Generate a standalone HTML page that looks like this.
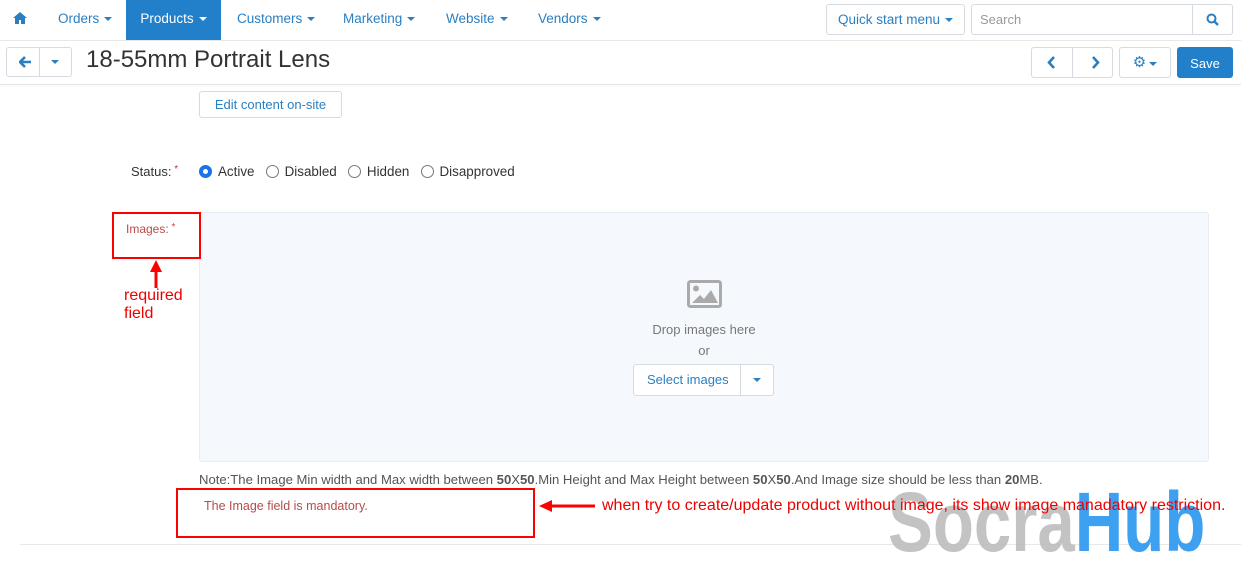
<!DOCTYPE html><html><head><style>
*{box-sizing:border-box;margin:0;padding:0}
body{width:1241px;height:559px;overflow:hidden;background:#fff;font-family:"Liberation Sans",sans-serif;color:#333;position:relative}
.a{position:absolute}
.nav{top:0;left:0;width:1241px;height:41px;border-bottom:1px solid #e8e8e8}
.ni{position:absolute;top:0;height:40px;line-height:37px;font-size:13.5px;color:#2a7fc1}
.car{display:inline-block;width:0;height:0;border-left:4px solid transparent;border-right:4px solid transparent;border-top:4px solid currentColor;vertical-align:middle;margin-left:5px}
.btn{position:absolute;border:1px solid #d5dbe0;border-radius:3px;background:#fff;color:#2a7fc1;font-size:13px;text-align:center}
.red{color:#e00;font-family:"Liberation Sans",sans-serif}
.rad{display:inline-block;width:13px;height:13px;border:1px solid #777;border-radius:50%;vertical-align:-2px;margin-right:6px;background:#fff}
</style></head><body>
<div class="a nav"></div>
<svg class="a" style="left:13px;top:12px" width="14" height="12" viewBox="0 0 14 12"><path d="M7 0L0 6h2v6h4V8h2v4h4V6h2z" fill="#2a7fc1"/></svg>
<div class="ni" style="left:58px">Orders<span class="car"></span></div>
<div class="ni" style="left:126px;width:95px;background:#2180c9;color:#fff;text-align:center">Products<span class="car"></span></div>
<div class="ni" style="left:237px">Customers<span class="car"></span></div>
<div class="ni" style="left:343px">Marketing<span class="car"></span></div>
<div class="ni" style="left:446px">Website<span class="car"></span></div>
<div class="ni" style="left:538px">Vendors<span class="car"></span></div>
<div class="btn" style="left:826px;top:4px;width:139px;height:31px;line-height:29px;font-size:13.5px">Quick start menu<span class="car"></span></div>
<div class="btn" style="left:971px;top:4px;width:262px;height:31px;line-height:29px;text-align:left;padding-left:8px;color:#999">Search</div>
<div class="btn" style="left:1192px;top:4px;width:41px;height:31px;border-radius:0 3px 3px 0"></div>
<svg class="a" style="left:1206px;top:13px" width="13" height="13" viewBox="0 0 13 13"><circle cx="5.5" cy="5.5" r="4" stroke="#2a7fc1" stroke-width="2" fill="none"/><path d="M8.5 8.5L12 12" stroke="#2a7fc1" stroke-width="2.4"/></svg>
<div class="a" style="left:0;top:84px;width:1241px;height:1px;background:#e5e5e5;box-shadow:0 1px 2px rgba(0,0,0,.05)"></div>
<div class="btn" style="left:6px;top:47px;width:66px;height:30px"></div>
<div class="a" style="left:39px;top:47px;width:1px;height:30px;background:#d5dbe0"></div>
<svg class="a" style="left:19px;top:56px" width="13" height="12" viewBox="0 0 13 12"><path d="M6 1L1 6l5 5M1 6h11" stroke="#2a7fc1" stroke-width="2.6" fill="none"/></svg>
<span class="a car" style="left:51px;top:60px;color:#2a7fc1;margin:0"></span>
<div class="a" style="left:86px;top:46px;font-size:24px;color:#333">18-55mm Portrait Lens</div>
<div class="btn" style="left:1031px;top:47px;width:82px;height:31px"></div>
<div class="a" style="left:1072px;top:47px;width:1px;height:31px;background:#d5dbe0"></div>
<svg class="a" style="left:1046px;top:56px" width="60" height="13"><path d="M8 1L3 6.5 8 12M47 1l5 5.5-5 5.5" stroke="#2a7fc1" stroke-width="2.6" fill="none"/></svg>
<div class="btn" style="left:1119px;top:47px;width:52px;height:31px;line-height:29px"><span style="font-size:15px">⚙</span><span class="car" style="margin-left:3px"></span></div>
<div class="btn" style="left:1177px;top:47px;width:56px;height:31px;line-height:31px;background:#2180c9;border-color:#2180c9;color:#fff">Save</div>
<div class="btn" style="left:199px;top:91px;width:143px;height:27px;line-height:25px">Edit content on-site</div>
<div class="a" style="left:131px;top:164px;font-size:13px">Status:<span style="color:#c33;font-size:10px;vertical-align:top"> *</span></div>
<div class="a" style="left:199px;top:164px;font-size:13.4px">
<span class="rad" style="border:4px solid #1a73e8"></span>Active&nbsp;&nbsp;&nbsp;<span class="rad"></span>Disabled&nbsp;&nbsp;&nbsp;<span class="rad"></span>Hidden&nbsp;&nbsp;&nbsp;<span class="rad"></span>Disapproved</div>
<div class="a" style="left:199px;top:212px;width:1010px;height:250px;background:#f5f9fd;border:1px solid #e6edf3;border-radius:3px"></div>
<svg class="a" style="left:687px;top:280px" width="35" height="28" viewBox="0 0 35 28"><rect x="1.5" y="1.5" width="32" height="25" rx="2" fill="none" stroke="#aaa" stroke-width="3"/><circle cx="9" cy="8.5" r="3" fill="#aaa"/><path d="M5 23l8-8 4 4 7-9 7 13z" fill="#aaa"/></svg>
<div class="a" style="left:600px;top:322px;width:208px;text-align:center;font-size:13px;color:#777">Drop images here</div>
<div class="a" style="left:600px;top:343px;width:208px;text-align:center;font-size:13px;color:#777">or</div>
<div class="btn" style="left:633px;top:364px;width:141px;height:32px;line-height:30px;text-align:left;padding-left:13px">Select images</div>
<div class="a" style="left:740px;top:364px;width:1px;height:32px;background:#d5dbe0"></div>
<span class="a car" style="left:753px;top:378px;color:#2a7fc1;margin:0"></span>
<div class="a" style="left:126px;top:222px;font-size:12px;color:#b94a48">Images:<span style="font-size:10px;vertical-align:top"> *</span></div>
<div class="a" style="left:112px;top:212px;width:89px;height:47px;border:2px solid #f00"></div>
<svg class="a" style="left:148px;top:258px" width="16" height="32"><path d="M8 2L2 14h12z" fill="#f00"/><path d="M8 12v18" stroke="#f00" stroke-width="3"/></svg>
<div class="a red" style="left:124px;top:287px;font-size:16px;line-height:18px">required<br>field</div>
<div class="a" style="left:199px;top:472px;font-size:13.1px;color:#555;white-space:nowrap">Note:The Image Min width and Max width between <b>50</b>X<b>50</b>.Min Height and Max Height between <b>50</b>X<b>50</b>.And Image size should be less than <b>20</b>MB.</div>
<div class="a" style="left:176px;top:488px;width:359px;height:50px;border:2px solid #f00"></div>
<div class="a" style="left:204px;top:499px;font-size:12.5px;color:#b94a48">The Image field is mandatory.</div>
<svg class="a" style="left:538px;top:499px" width="60" height="14"><path d="M1 7l13-6v12z" fill="#f00"/><path d="M12 7h45" stroke="#f00" stroke-width="3"/></svg>
<div class="a" style="left:20px;top:544px;width:1221px;height:1px;background:#e8e8e8"></div>
<div class="a" style="left:888px;top:482px;font-size:84px;font-weight:bold;white-space:nowrap;line-height:80px;transform:scaleX(0.8);transform-origin:0 0"><span style="color:rgba(185,185,185,.85)">Socra</span><span style="color:rgba(40,150,240,.9)">Hub</span></div>
<div class="a red" style="left:602px;top:497px;font-size:16px;white-space:nowrap">when try to create/update product without image, its show image manadatory restriction.</div>
</body></html>
